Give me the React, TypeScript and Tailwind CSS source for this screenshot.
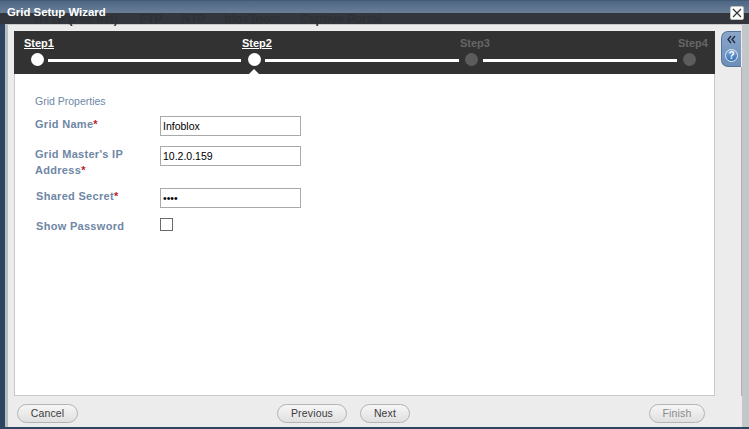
const Step = ({ label, on, w }: { label: string; on: boolean; w: string }) => (
  <span className={`text-[11px] leading-[16px] font-bold ${w}`}>
    <span className={on ? "text-white underline" : "text-[#666666]"}>{label}</span>
  </span>
);

const Dot = ({ on, ml }: { on: boolean; ml: string }) => (
  <span className={`h-[13px] w-[13px] shrink-0 rounded-full ${ml} ${on ? "bg-white" : "bg-[#5c5c5c]"}`} />
);

const Line = ({ w, ml }: { w: string; ml: string }) => <span className={`mt-[2px] h-[3px] ${w} ${ml} bg-white`} />;

const Field = ({ label, value, pl }: { label: React.ReactNode; value: string; pl?: string }) => (
  <div className="flex items-start">
    <div className={`w-[125px] text-[11px] leading-[16px] font-bold tracking-[0.3px] text-[#6f87a5] ${pl ?? ""}`}>{label}</div>
    <input
      readOnly
      value={value}
      className="h-[20px] w-[141px] border border-[#a9a9a9] bg-white px-[2px] text-[10.5px] text-black outline-none"
    />
  </div>
);

const Req = () => <span className="text-[#c0202f]">*</span>;

const Btn = ({ label, w, off, ml }: { label: string; w: string; off?: boolean; ml?: string }) => (
  <button
    className={`h-[19px] ${w} ${ml ?? ""} rounded-full border border-[#b4b4b4] bg-gradient-to-b from-[#f6f6f6] to-[#e0e0e0] text-[10.5px] leading-none tracking-[0.15px] ${off ? "text-[#8a8a8a]" : "text-[#3c3c3c]"}`}
  >
    {label}
  </button>
);

export default function App() {
  return (
    <div className="flex h-[429px] w-[749px] flex-col overflow-hidden bg-[#2f4460] pb-[2px] font-['Liberation_Sans',Arial,sans-serif]">
      <div className="relative flex h-[24px] shrink-0 items-start justify-between bg-[linear-gradient(#3b4f66_0,#4d6785_1px,#6a7e96_13px,#33363c_13px,#33363c_24px)] pt-[6px] pr-[5px] pl-[7px]">
        {/* tabs of the page behind, showing through the title bar */}
        <div className="absolute top-[15px] left-[34px] flex gap-[19px] text-[12px] leading-[9px] font-bold text-[#2e3136]">
          <span>HTTP (File list)</span>
          <span className="ml-[3px]">FTP</span>
          <span>NTP</span>
          <span>bloxTools</span>
          <span className="ml-[1px]">Captive Portal</span>
        </div>
        <span className="relative mt-[1px] text-[11.4px] leading-[10px] font-bold text-white">Grid Setup Wizard</span>
        <span className="relative flex h-[14px] w-[14px] items-center justify-center rounded-[2px] border border-[#c4c4c4] bg-white text-[#333]">
          <svg viewBox="0 0 10 10" className="h-[10px] w-[10px]" fill="none" stroke="currentColor" strokeWidth="1.2">
            <path d="M1 1l8 8M9 1l-8 8" />
          </svg>
        </span>
      </div>
      <div className="ml-[5px] flex min-h-0 flex-1 flex-col border-t border-r-[7px] border-l-[3px] border-t-[#c9c9c9] border-r-[#c4c7c9] border-l-[#b8bec4] bg-[#ececec] pt-[6px] pl-[6px]">
        <div className="flex min-h-0 flex-1">
          <div className="flex w-[701px] flex-col">
            <div className="relative h-[43px] shrink-0 bg-[#323232] pt-[4px]">
              <div className="flex pl-[10px]">
                <Step label="Step1" on w="w-[218px]" />
                <Step label="Step2" on w="w-[218px]" />
                <Step label="Step3" on={false} w="w-[218px]" />
                <Step label="Step4" on={false} w="w-[30px]" />
              </div>
              <div className="mt-[2px] flex items-center pl-[17px]">
                <Dot on ml="" />
                <Line w="w-[193px]" ml="ml-[4px]" />
                <Dot on ml="ml-[7px]" />
                <Line w="w-[194px]" ml="ml-[4px]" />
                <Dot on={false} ml="ml-[6px]" />
                <Line w="w-[194px]" ml="ml-[5px]" />
                <Dot on={false} ml="ml-[6px]" />
              </div>
              <span className="absolute bottom-0 left-[235px] h-0 w-0 border-x-[5px] border-b-[5px] border-x-transparent border-b-white" />
            </div>
            <div className="flex flex-1 flex-col border-x border-b border-[#c8c8c8] bg-white pt-[21px] pl-[20px]">
              <div className="text-[10.5px] leading-[12px] text-[#6f87a5]">Grid Properties</div>
              <div className="mt-[9px] flex flex-col gap-[10px]">
                <Field label={<>Grid Name<Req /></>} value="Infoblox" />
                <Field label={<>Grid Master's IP<br />Address<Req /></>} value="10.2.0.159" />
                <Field label={<>Shared Secret<Req /></>} value="••••" pl="pl-[1px]" />
                <div className="flex items-start pl-[1px]">
                  <span className="w-[124px] text-[11px] leading-[16px] font-bold tracking-[0.3px] text-[#6f87a5]">Show Password</span>
                  <span className="h-[13px] w-[13px] border border-[#6a6a6a] bg-white" />
                </div>
              </div>
            </div>
          </div>
          <div className="ml-[6px] flex w-[21px] flex-col">
            <div className="flex h-[36px] w-[20px] shrink-0 flex-col items-center rounded-l-[7px] border border-r-0 border-[#56759e] bg-gradient-to-b from-[#8ba6c9] to-[#6d8eb8] pt-[3px]">
              <svg viewBox="0 0 9 9" className="h-[9px] w-[9px]" fill="none" stroke="#1d2c44" strokeWidth="1.3">
                <path d="M4 1L1 4.5L4 8M8 1L5 4.5L8 8" />
              </svg>
              <span className="mt-[5px] flex h-[13px] w-[13px] items-center justify-center rounded-full border border-[#dfe8f3] bg-gradient-to-b from-[#7fa8d6] to-[#2f6fb5] text-[10px] leading-none font-bold text-white">
                ?
              </span>
            </div>
            <div className="ml-[20px] w-[1px] flex-1 bg-[#b0b0b0]" />
          </div>
        </div>
        <div className="flex h-[31px] shrink-0 items-start pt-[8px] pr-[37px] pl-[3px]">
          <Btn label="Cancel" w="w-[61px]" />
          <Btn label="Previous" w="w-[70px]" ml="ml-[199px]" />
          <Btn label="Next" w="w-[50px]" ml="ml-[13px]" />
          <Btn label="Finish" w="w-[56px]" ml="ml-auto" off />
        </div>
      </div>
    </div>
  );
}
